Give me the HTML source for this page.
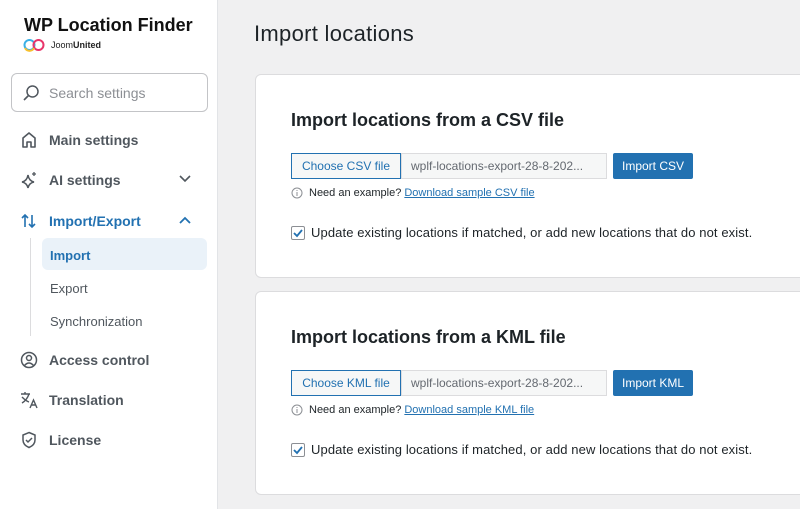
<!DOCTYPE html><html><head><style>
body{margin:0;width:800px;height:509px;overflow:hidden;background:#f0f0f1;font-family:"Liberation Sans",sans-serif;position:relative}
.side{position:absolute;left:0;top:0;width:217px;height:509px;background:#fff;border-right:1px solid #e2e4e7}
.a{position:absolute}
.nav{position:absolute;left:20px;font-size:14px;color:#50575e;font-weight:bold;display:flex;align-items:center}
.nav svg{margin-right:11px}
.sub{position:absolute;left:50px;font-size:13px;color:#50575e}
.card{position:absolute;left:255px;width:560px;background:#fff;border:1px solid #dcdcde;border-radius:6px}
h2{position:absolute;left:35px;margin:0;font-size:18px;font-weight:bold;color:#1d2327}
.choose{position:absolute;left:35px;width:110px;height:26px;border:1px solid #2271b1;background:#f6f7f7;color:#2271b1;font-size:12px;line-height:24px;text-align:center;box-sizing:border-box}
.fn{position:absolute;left:145px;width:206px;height:26px;border:1px solid #dcdcde;background:#f6f7f7;color:#646970;font-size:12px;line-height:24px;padding-left:9px;box-sizing:border-box}
.imp{position:absolute;left:357px;width:80px;height:26px;background:#2271b1;border-radius:2px;color:#fff;font-size:12px;line-height:26px;text-align:center}
.info{position:absolute;left:35px;font-size:11px;color:#1d2327;display:flex;align-items:center}
.info a{color:#2271b1;text-decoration:underline;margin-left:3px}
.chk{position:absolute;left:35px;font-size:13px;color:#1d2327;display:flex;align-items:center;letter-spacing:0.1px}
.box{width:12px;height:12px;border:1px solid #8c8f94;border-radius:2px;margin-right:6px;position:relative;background:#fff}
</style></head><body>
<div class="side">
<div class="a" style="left:24px;top:15px;font-size:18px;font-weight:bold;color:#111">WP Location Finder</div>
<svg class="a" style="left:23px;top:38px" width="22" height="14"><circle cx="6.5" cy="7" r="5" fill="none" stroke="#3ab0e6" stroke-width="2"/><circle cx="15.5" cy="7" r="5" fill="none" stroke="#e8356a" stroke-width="2"/><path d="M2 10a5 5 0 0 0 9 0" stroke="#f7c02e" stroke-width="2" fill="none"/></svg>
<div class="a" style="left:51px;top:40px;font-size:9px;color:#222">Joom<b>United</b></div>
<div class="a" style="left:11px;top:73px;width:197px;height:39px;border:1px solid #c3c4c7;border-radius:6px;box-sizing:border-box"></div>
<svg class="a" style="left:22px;top:84px" width="18" height="18"><circle cx="10.5" cy="7.5" r="5.5" fill="none" stroke="#50575e" stroke-width="1.5"/><path d="M6.5 11.5L2 16" stroke="#50575e" stroke-width="1.6"/></svg>
<div class="a" style="left:49px;top:85px;font-size:14px;color:#8c8f94">Search settings</div>
<div class="nav" style="top:131px"><svg width="18" height="18"><path d="M3 16V7l6-5 6 5v9h-4v-5H7v5z" fill="none" stroke="#50575e" stroke-width="1.6" stroke-linejoin="round"/></svg>Main settings</div>
<div class="nav" style="top:171px"><svg width="18" height="18"><path d="M8 4q1 6 6 7q-5 1-6 6q-1-5-6-6q5-1 6-7z" fill="none" stroke="#50575e" stroke-width="1.5"/><path d="M14 1v4M12 3h4" stroke="#50575e" stroke-width="1.3"/></svg>AI settings</div>
<svg class="a" style="left:179px;top:175px" width="12" height="8"><path d="M1 1l5 5 5-5" fill="none" stroke="#50575e" stroke-width="1.6"/></svg>
<div class="nav" style="top:212px;color:#2271b1"><svg width="18" height="18"><path d="M5 15V3M2 6l3-3 3 3M12 3v12M9 12l3 3 3-3" fill="none" stroke="#2271b1" stroke-width="1.6"/></svg>Import/Export</div>
<svg class="a" style="left:179px;top:216px" width="12" height="8"><path d="M1 7l5-5 5 5" fill="none" stroke="#2271b1" stroke-width="1.8"/></svg>
<div class="a" style="left:30px;top:238px;width:1px;height:98px;background:#dcdcde"></div>
<div class="a" style="left:42px;top:238px;width:165px;height:32px;background:#eaf2f9;border-radius:6px"></div>
<div class="sub" style="top:248px;color:#2271b1;font-weight:bold">Import</div>
<div class="sub" style="top:281px">Export</div>
<div class="sub" style="top:314px">Synchronization</div>
<div class="nav" style="top:351px"><svg width="18" height="18"><circle cx="9" cy="9" r="7.5" fill="none" stroke="#50575e" stroke-width="1.5"/><circle cx="9" cy="7" r="2.5" fill="none" stroke="#50575e" stroke-width="1.5"/><path d="M4.5 14.5q4.5-5 9 0" fill="none" stroke="#50575e" stroke-width="1.5"/></svg>Access control</div>
<div class="nav" style="top:391px"><svg width="18" height="18"><path d="M1 3h9M5 1v2M2 6q4 4 7 5M9 3q-2 6-7 9M10 17l3.5-8 3.5 8M11 14h5" fill="none" stroke="#50575e" stroke-width="1.4"/></svg>Translation</div>
<div class="nav" style="top:431px"><svg width="18" height="18"><path d="M9 1.5l6 2.5v5q0 5-6 7.5q-6-2.5-6-7.5V4z" fill="none" stroke="#50575e" stroke-width="1.5"/><path d="M6 9l2 2 4-4" fill="none" stroke="#50575e" stroke-width="1.5"/></svg>License</div>
</div>
<div class="a" style="left:254px;top:21px;font-size:22px;color:#1d2327;letter-spacing:0.3px">Import locations</div>
<div class="card" style="top:74px;height:202px">
<h2 style="top:35px">Import locations from a CSV file</h2>
<div class="choose" style="top:78px">Choose CSV file</div><div class="fn" style="top:78px">wplf-locations-export-28-8-202...</div><div class="imp" style="top:78px">Import CSV</div>
<div class="info" style="top:112px"><svg width="12" height="12" style="margin-right:6px"><circle cx="6" cy="6" r="5" fill="none" stroke="#8c8f94"/><path d="M6 5v4M6 3v1" stroke="#8c8f94"/></svg>Need an example?<a>Download sample CSV file</a></div>
<div class="chk" style="top:150px"><div class="box"><svg width="12" height="12" class="a" style="left:0;top:0"><path d="M2 6l3 3 5-6" fill="none" stroke="#2271b1" stroke-width="1.8"/></svg></div>Update existing locations if matched, or add new locations that do not exist.</div>
</div>
<div class="card" style="top:291px;height:202px">
<h2 style="top:35px">Import locations from a KML file</h2>
<div class="choose" style="top:78px">Choose KML file</div><div class="fn" style="top:78px">wplf-locations-export-28-8-202...</div><div class="imp" style="top:78px">Import KML</div>
<div class="info" style="top:112px"><svg width="12" height="12" style="margin-right:6px"><circle cx="6" cy="6" r="5" fill="none" stroke="#8c8f94"/><path d="M6 5v4M6 3v1" stroke="#8c8f94"/></svg>Need an example?<a>Download sample KML file</a></div>
<div class="chk" style="top:150px"><div class="box"><svg width="12" height="12" class="a" style="left:0;top:0"><path d="M2 6l3 3 5-6" fill="none" stroke="#2271b1" stroke-width="1.8"/></svg></div>Update existing locations if matched, or add new locations that do not exist.</div>
</div>
</body></html>
